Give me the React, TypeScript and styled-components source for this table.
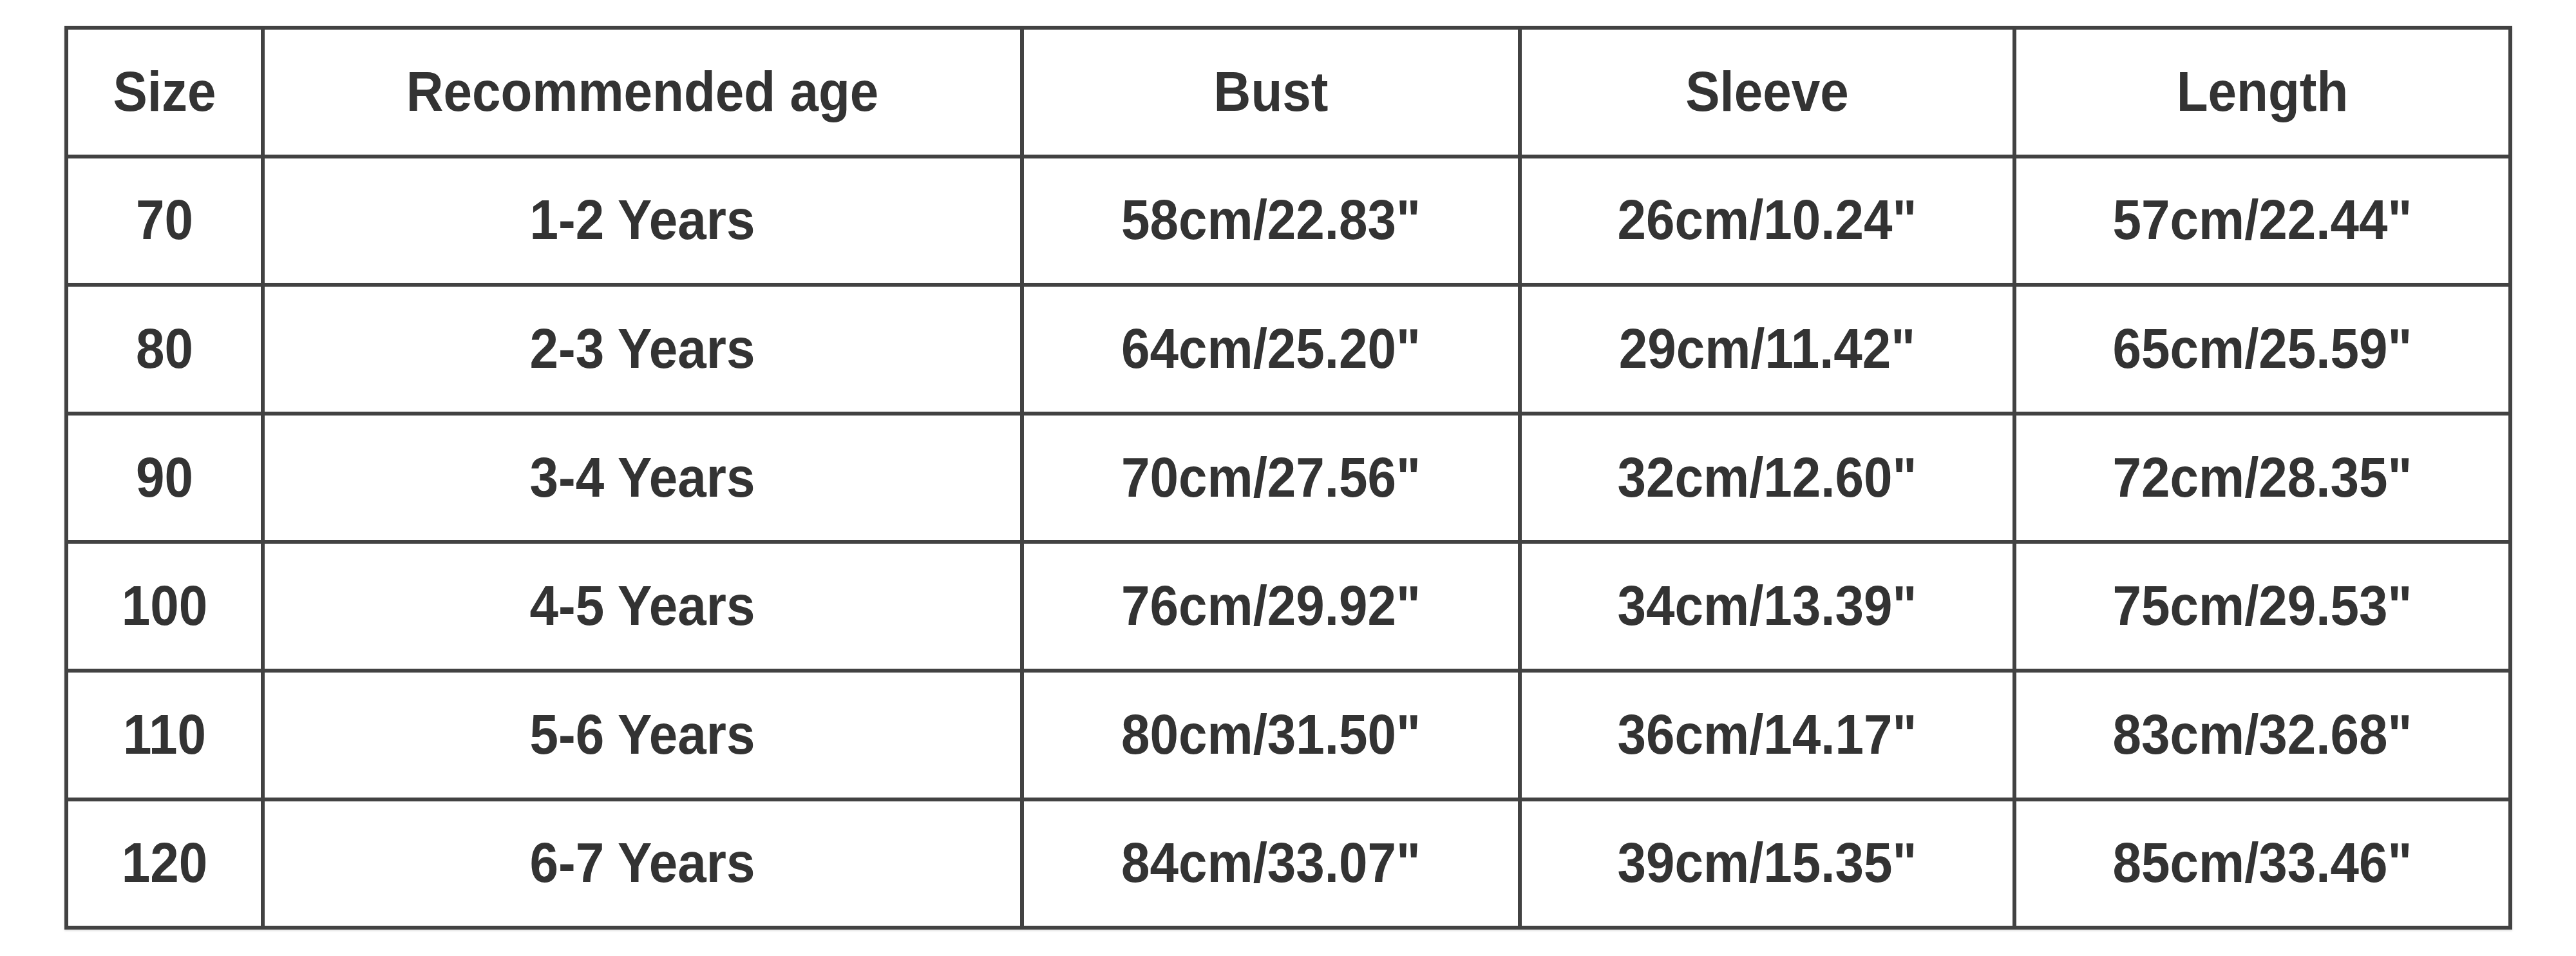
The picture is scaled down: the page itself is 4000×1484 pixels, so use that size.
import styled, { createGlobalStyle } from 'styled-components';

const GlobalStyle = createGlobalStyle`
  html, body {
    margin: 0;
    padding: 0;
    background: #ffffff;
  }
  body {
    font-family: "Liberation Sans", Arial, sans-serif;
  }
`;

const Page = styled.div`
  width: 4000px;
  height: 1484px;
  padding: 40px 0 0 100px;
  box-sizing: border-box;
  background: #ffffff;
`;

const Grid = styled.div`
  display: grid;
  grid-template-columns: 299px 1173px 767px 762px 764px;
  grid-auto-rows: 193.6px;
  gap: 6px;
  padding: 6px;
  width: 3801px;
  box-sizing: border-box;
  background: #424242;
  box-shadow: 0 2px 3px rgba(0, 0, 0, 0.12);
`;

const Cell = styled.div`
  display: flex;
  align-items: center;
  justify-content: center;
  background: #ffffff;
  color: #333333;
  font-size: 80px;
  font-weight: 700;
  white-space: nowrap;
`;

const Label = styled.span`
  display: inline-block;
  transform: scaleY(1.08);
`;

const headers = ['Size', 'Recommended age', 'Bust', 'Sleeve', 'Length'];

const rows = [
  ['70', '1-2 Years', '58cm/22.83"', '26cm/10.24"', '57cm/22.44"'],
  ['80', '2-3 Years', '64cm/25.20"', '29cm/11.42"', '65cm/25.59"'],
  ['90', '3-4 Years', '70cm/27.56"', '32cm/12.60"', '72cm/28.35"'],
  ['100', '4-5 Years', '76cm/29.92"', '34cm/13.39"', '75cm/29.53"'],
  ['110', '5-6 Years', '80cm/31.50"', '36cm/14.17"', '83cm/32.68"'],
  ['120', '6-7 Years', '84cm/33.07"', '39cm/15.35"', '85cm/33.46"'],
];

export default function App() {
  return (
    <>
      <GlobalStyle />
      <Page>
        <Grid>
          {headers.map((h) => (
            <Cell key={h}>
              <Label>{h}</Label>
            </Cell>
          ))}
          {rows.map((row) =>
            row.map((value, i) => (
              <Cell key={row[0] + '-' + i}>
                <Label>{value}</Label>
              </Cell>
            ))
          )}
        </Grid>
      </Page>
    </>
  );
}
